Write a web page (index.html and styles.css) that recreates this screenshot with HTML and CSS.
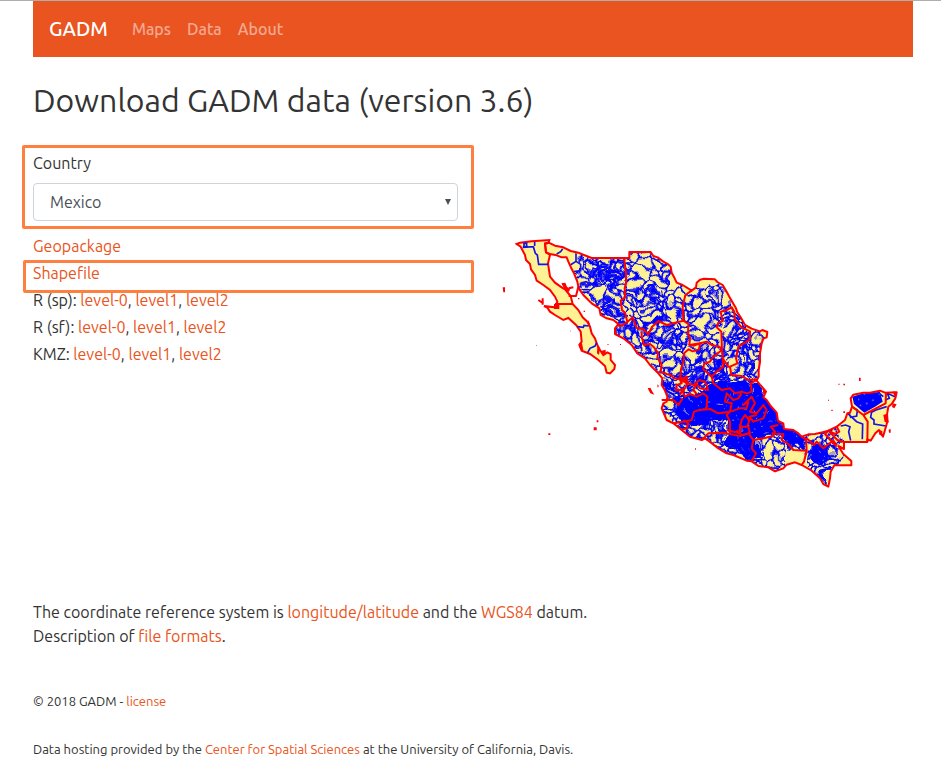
FILE: index.html
```html
<!DOCTYPE html>
<html lang="en">
<head>
<meta charset="utf-8">
<meta name="viewport" content="width=device-width, initial-scale=1">
<title>GADM</title>
<link rel="stylesheet" href="styles.css">
</head>
<body>
<div class="container">
  <nav class="navbar">
    <a class="brand" href="#">GADM</a>
    <a class="nav-link" href="#">Maps</a>
    <a class="nav-link" href="#">Data</a>
    <a class="nav-link" href="#">About</a>
  </nav>
  <main>
    <h1>Download GADM data (version 3.6)</h1>
    <div class="columns">
      <section>
        <div class="country marked">
          <label for="country">Country</label>
          <div class="select-wrap">
            <select id="country"><option>Mexico</option></select>
          </div>
        </div>
        <ul class="downloads">
          <li><a href="#">Geopackage</a></li>
          <li class="marked"><a href="#">Shapefile</a></li>
          <li>R (sp): <a href="#">level-0</a>, <a href="#">level1</a>, <a href="#">level2</a></li>
          <li>R (sf): <a href="#">level-0</a>, <a href="#">level1</a>, <a href="#">level2</a></li>
          <li>KMZ: <a href="#">level-0</a>, <a href="#">level1</a>, <a href="#">level2</a></li>
        </ul>
      </section>
      <svg class="map" viewBox="-36 -237 1275 1275" aria-hidden="true">
        <defs>
          <filter id="warp" x="0" y="0" width="1275" height="800" filterUnits="userSpaceOnUse" color-interpolation-filters="sRGB">
            <feTurbulence type="fractalNoise" baseFrequency=".02" numOctaves="2" seed="4"/>
            <feDisplacementMap in="SourceGraphic" scale="62" xChannelSelector="R" yChannelSelector="G"/>
          </filter>
          <path id="cells" d="M0,20 L18,28 32,14 28,0 M28,110 L34,94 18,80 0,84 M110,84 L92,78 88,94 82,110 M82,0 L78,16 94,28 110,20 M32,14 L52,22 78,16 M52,22 L48,42 64,52 84,46 94,28 M18,28 L14,48 28,56 48,42 M28,56 L34,68 18,80 M14,48 L0,52 M110,52 L98,58 84,46 M98,58 L92,78 M64,52 L62,72 74,82 92,78 M34,68 L50,76 62,72 M50,76 L52,96 34,94 M52,96 L66,100 74,82 M66,100 L82,110"/>
          <pattern id="sparse" width="110" height="110" patternUnits="userSpaceOnUse" patternTransform="rotate(17) scale(1 .85)"><use href="#cells" class="mesh"/></pattern>
          <pattern id="medium" width="110" height="110" patternUnits="userSpaceOnUse" patternTransform="rotate(-24) scale(.7 .85)"><use href="#cells" class="mesh mesh-medium"/></pattern>
          <pattern id="dense" width="110" height="110" patternUnits="userSpaceOnUse" patternTransform="rotate(40) scale(.5 .62)"><use href="#cells" class="mesh mesh-dense"/></pattern>
          <pattern id="packed" width="67" height="59" patternUnits="userSpaceOnUse" patternTransform="rotate(12)">
            <path class="packed" d="M0,0H67V59H0Z"/>
            <path class="speck" d="M8,8h4v3h-4z M31,15h3v5h-3z M52,6h4v3h-4z M18,36h3v3h-3z M43,43h5v3h-5z M60,29h3v4h-3z M26,52h4v3h-4z"/>
          </pattern>
          <path id="mainland" d="M138,68 L135,40 146,38 165,47 190,52 212,63 235,68 275,84 388,84 388,66 452,66 460,78 473,82 490,95 505,103 512,110 515,128 524,145 530,158 548,165 575,182 588,172 590,158 600,149 612,146 645,148 652,156 668,165 680,185 688,200 708,235 712,247 722,262 735,285 755,296 780,304 787,300 802,306 800,322 790,326 785,340 780,370 780,396 776,420 776,440 770,452 780,464 790,475 798,485 790,502 800,510 812,528 830,548 834,573 850,580 852,597 880,600 895,610 905,620 925,613 945,612 968,607 985,602 1010,590 1035,570 1042,550 1050,548 1056,530 1052,505 1060,494 1090,488 1110,488 1140,482 1155,488 1190,487 1186,505 1175,522 1165,530 1160,560 1162,575 1155,600 1149,620 1137,600 1126,610 1112,632 1102,628 1102,636 1032,636 1032,657 1015,648 1030,672 1054,693 1054,706 1003,706 992,725 990,745 985,770 970,762 960,745 935,722 905,705 885,697 860,704 850,715 825,724 805,712 775,708 755,694 740,692 700,675 680,670 655,655 625,632 615,625 605,630 570,620 545,600 520,580 500,570 485,535 490,520 500,515 502,500 494,480 485,465 487,445 475,430 450,405 435,385 412,370 395,345 370,325 345,312 345,295 355,282 340,270 320,265 302,255 298,235 275,220 250,195 236,175 232,155 222,130 214,115 205,95 200,82 185,82 170,76 150,72Z"/>
          <clipPath id="land"><use href="#mainland"/></clipPath>
        </defs>
        <use href="#mainland" class="fill"/>
        <g clip-path="url(#land)">
          <g filter="url(#warp)">
            <path fill="url(#sparse)" d="M225,60 378,70 378,285 300,260 220,150Z"/>
            <path fill="url(#medium)" d="M255,85 375,90 378,150 350,188 300,180 260,150Z"/>
            <path fill="url(#dense)" d="M275,92 345,92 365,130 355,170 310,165 292,135 270,120Z M315,195 345,195 365,285 315,250Z"/>
            <path fill="url(#sparse)" d="M374,50H585V182L550,290 382,285Z"/>
            <path fill="url(#medium)" d="M410,160 470,180 500,160 520,210 500,270 460,280 430,230 385,240 380,190Z"/>
            <path fill="url(#sparse)" d="M330,290 400,268 550,272 570,300 575,380 545,450 500,480 380,360Z"/>
            <path fill="url(#medium)" d="M335,290 398,265 425,315 430,385 350,330Z M455,290 525,280 555,330 535,370 470,350 440,365 430,340Z"/>
            <path fill="url(#sparse)" d="M558,190 600,170 665,225 660,345 570,345 548,275Z M550,352 670,340 700,450 540,460Z"/>
            <path fill="url(#medium)" d="M610,165 635,170 670,160 710,240 655,265 625,225Z M550,380 660,380 690,460 540,470Z"/>
            <path fill="url(#dense)" d="M665,255 700,240 750,310 745,335 715,355 670,325Z"/>
            <path fill="url(#medium)" d="M670,320 790,305 795,455 700,450 665,350Z"/>
            <path fill="url(#dense)" d="M720,335 765,330 765,440 715,445Z M640,390 690,380 700,455 610,450Z M540,460 650,435 790,455 790,490 540,515Z"/>
            <path fill="url(#packed)" d="M510,505 560,505 605,490 640,465 765,460 860,570 925,615 910,650 870,650 835,610 765,630 768,690 740,690 670,635 690,590 640,580 550,570 520,540Z"/>
            <path fill="url(#dense)" d="M470,445 535,460 560,510 560,540 480,560Z M500,550 700,550 670,620 600,645 510,590Z M605,605 770,620 780,715 700,710 600,650Z"/>
            <path fill="url(#medium)" d="M480,440 550,450 540,500 480,510Z M765,625 835,612 870,660 865,700 825,735 755,710Z M850,590 920,620 915,665 870,655Z M920,605 1015,590 1035,655 920,670Z"/>
            <path fill="url(#dense)" d="M920,655 1000,640 1025,690 990,710 990,780 910,705Z"/>
            <path fill="url(#packed)" d="M925,665 950,640 988,652 995,685 970,702 945,700Z M965,725 990,720 985,780Z"/>
          </g>
          <path fill="url(#packed)" d="M1057,500 1090,490 1140,486 1148,515 1125,530 1093,548 1062,522Z"/>
          <path class="municipal" d="M188,56 182,65 170,72 M228,70 228,94 211,105 M228,94 242,103 242,122 222,125 M242,160 258,155 290,170 M1050,535 1045,552 1070,575 1088,582 1087,628 M1056,530 1072,540 1070,558 1052,562 1048,552 M1022,588 1037,585 1050,590 1046,605 1052,632 M1112,548 1128,540 1160,530 M1115,545 1112,562 1122,570 1122,582 1158,588 M1155,510 1168,505 1162,490 1185,500 M1135,488 1150,500"/>
        </g>
        <path class="land" d="M50,42 60,38 95,34 148,30 146,38 135,42 138,66 150,75 144,100 150,140 165,158 185,172 195,178 212,198 218,222 235,240 248,262 262,275 270,290 275,310 285,325 292,345 300,360 310,375 322,367 332,372 332,390 345,405 343,417 330,430 320,428 315,408 295,390 270,372 245,362 238,345 245,335 242,305 228,285 205,264 190,270 165,255 150,245 142,233 132,228 165,232 172,215 165,200 150,180 130,165 110,152 105,135 93,118 90,102 78,90 75,75 62,50Z"/>
        <path class="municipal" d="M68,52 100,50 106,70 112,75 116,103 144,103 M72,40H80V50H72Z M104,36 104,48 M232,290 250,292 252,286 266,288 M263,368 270,355 285,348 290,338"/>
        <g class="border">
          <use href="#mainland"/>
          <path d="M165,222 218,222 M372,84 378,130 378,160 374,175 376,202 362,212 366,240 375,248 382,276 398,262 410,294 430,297 445,314 455,292 475,273 500,285 550,272 548,230 556,195 575,182"/>
          <path d="M382,276 365,287 352,285 M425,305 425,320 432,345 450,342 462,352 475,370 472,382 485,405 482,425 500,432 512,435 522,445 545,447 M550,272 565,282 564,310 570,325 568,345 582,347 600,340 597,358 578,364 566,358 552,370 551,390 543,418 540,448 545,460 530,465 528,482 550,478 540,495"/>
          <path d="M568,345 600,340 620,335 635,345 658,350 666,360 640,380 630,395 612,402 610,418 635,440 650,425 670,410 666,360 M666,360 664,305 650,292 655,278 668,273 662,245 680,240 695,232 703,245 704,268 725,292 750,304 750,328 715,350 708,385 712,400 690,410 685,410 668,385 M690,410 694,435 725,438 745,450 770,448"/>
          <path d="M635,440 640,460 665,480 690,475 705,490 725,485 740,490 755,485 752,460 770,450 M545,447 560,440 564,460 548,485 555,500 570,492 590,500 610,490 622,500 620,530 614,540 M540,445 560,460 582,465 598,450 615,455 625,480 600,475 590,462 580,480 590,492 M485,510 520,510 535,525 548,505"/>
          <path d="M520,580 550,575 575,570 582,545 598,540 630,537 655,550 690,545 695,520 675,515 680,490 700,510 715,505 725,490 M550,570 565,580 560,595 548,598 M605,630 625,610 670,608 690,612 690,575 680,555 690,545 M680,600 720,610 720,590 745,590 750,610 725,615 710,600 M720,590 725,570 735,555 748,570 742,590 M690,545 720,535 740,535 745,515 730,525 755,500 765,520 750,545 770,550 790,525 800,540 790,565 760,575 748,560 770,555"/>
          <path d="M690,612 720,618 745,610 760,630 790,625 820,618 825,605 812,590 835,585 M760,630 755,655 768,670 755,694 M815,610 850,612 845,630 865,642 880,660 920,662 918,628 905,620 M920,662 912,695 905,705 M920,625 942,645 950,635 970,655 982,645 1000,632 1010,645 M1032,636 1012,630 985,602 975,612 1010,650 M985,602 1005,612 1018,605 1010,590 M1102,636 1103,575 1090,555 1056,530 M1090,555 1157,520 1158,488"/>
          <path d="M206,198 228,198 235,170 M206,175 220,172 M115,210 130,220 M128,205V224"/>
        </g>
        <path class="islands" d="M8,172h7v15h-5z M184,160l12,-2 5,12 9,8 -3,8 -12,-5z M162,222h16v15h-16z M145,610h6v5h-6z M281,592h9v9h-9z M290,571h5v6h-5z M443,475l8,-2 7,13 5,8 -12,-4z M1077,443h5v10h-5z M1030,461h5v5h-5z M994,539h4v4h-4z M1030,544h5v5h-5z M1166,599l6,-2v11h-5z M1150,555l14,-5 2,28 -12,-2z M1178,520l12,3 -7,12 -7,-4z M238,340l8,0 4,20 -10,-2z M292,350l8,5 -3,20 -6,-5z M305,362l12,-3v14l-10,2z M788,475l10,9 -8,12z M538,440l16,3 6,12 -20,4z M234,204h4v4h-4z M251,242h4v4h-4z M265,270l6,15 -8,-4z M472,463l5,5 -4,5z M1135,600l12,3v15l-9,-4z M1180,484l10,3v10h-8z M837,570l7,8 -8,3z M360,342h3v3h-3z M984,509h3v3h-3z M1015,461h4v3h-4z M109,345h2v2h-2z M585,655h3v4h-3z M210,302h3v2h-3z M322,342h4v2h-4z"/>
      </svg>
    </div>
    <p class="notes">The coordinate reference system is <a href="#">longitude/latitude</a> and the <a href="#">WGS84</a> datum.<br>Description of <a href="#">file formats</a>.</p>
  </main>
  <footer>
    <p>© 2018 GADM - <a href="#">license</a></p>
    <p>Data hosting provided by the <a href="#">Center for Spatial Sciences</a> at the University of California, Davis.</p>
  </footer>
</div>
</body>
</html>
```
FILE: styles.css
```css
* { box-sizing: border-box; }
body {
  margin: 0;
  border-top: 1px solid #aeaeae;
  background: #fff;
  color: #333;
  font: 16px/24px Ubuntu, "Noto Sans", sans-serif;
}
a { color: #e95420; text-decoration: none; }
.container { padding: 0 28px 0 33px; }
.navbar {
  display: flex;
  align-items: center;
  gap: 16px;
  height: 56px;
  padding: 0 16px;
  background: #e95420;
}
.brand { margin-right: 8px; color: #fff; font-size: 20px; font-weight: 500; }
.nav-link { color: rgba(255, 255, 255, .5); font-weight: 500; }
h1 { margin: 24px 0; font-size: 32px; line-height: 38px; font-weight: 400; }
.columns { display: grid; grid-template-columns: 1fr 1fr; gap: 30px; padding-top: 8px; }
.marked { position: relative; }
.marked::after {
  content: "";
  position: absolute;
  inset: -6px -16px -8px -11px;
  border: 3px solid #ff7f41;
  border-radius: 2px;
  pointer-events: none;
}
li.marked::after { inset: 0 -16px -6px -10px; }
.country label { display: block; margin-bottom: 8px; }
.select-wrap { position: relative; }
.select-wrap::after {
  content: "";
  position: absolute;
  top: 16px;
  right: 7px;
  border: solid transparent;
  border-width: 6px 3px 0;
  border-top-color: #495057;
  pointer-events: none;
}
select {
  display: block;
  width: 100%;
  height: 38px;
  padding: 0 16px;
  border: 1px solid #ced4da;
  border-radius: 4px;
  background: #fff;
  color: #495057;
  font: inherit;
  appearance: none;
}
.downloads { margin: 12px 0 0; padding: 0; list-style: none; line-height: 27px; }
.map { display: block; width: 100%; }
.fill { fill: #fff294; }
.land { fill: #fff294; stroke: #f00; stroke-width: 6; }
.border { fill: none; stroke: #f00; stroke-width: 6; stroke-linejoin: round; }
.municipal { fill: none; stroke: #1414e6; stroke-width: 5; }
.mesh { fill: none; stroke: #00f; stroke-width: 7; }
.mesh-medium { stroke-width: 8; }
.mesh-dense { stroke-width: 12; }
.packed { fill: #00f; }
.speck { fill: #c9c4b4; }
.islands { fill: #f00; }
.notes { margin: 24px 0 0; }
footer { margin-top: 41px; font-size: 13px; }
footer p { margin: 0 0 24px; }
```
